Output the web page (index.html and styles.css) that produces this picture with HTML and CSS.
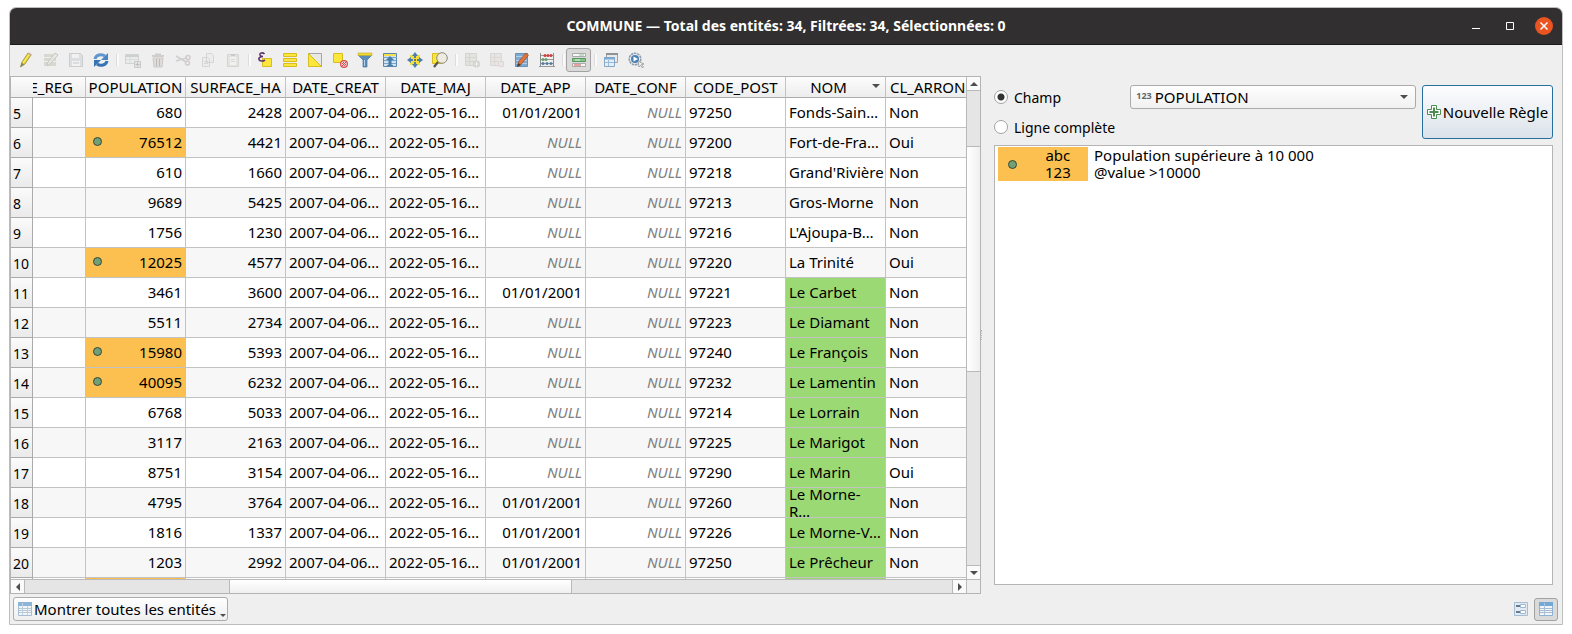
FILE: index.html
```html
<!DOCTYPE html>
<html lang="fr">
<head>
<meta charset="utf-8">
<title>COMMUNE — Total des entités: 34, Filtrées: 34, Sélectionnées: 0</title>
<link rel="stylesheet" href="styles.css">
</head>
<body>
<main class="window">
  <header class="titlebar">
    <h1 class="title">COMMUNE — Total des entités: 34, Filtrées: 34, Sélectionnées: 0</h1>
    <div class="window-controls">
      <button class="win-btn" aria-label="Réduire"><svg width="18" height="18"><path d="M5 11.500h8" stroke="#fff"/></svg></button>
      <button class="win-btn" aria-label="Agrandir"><svg width="18" height="18"><path d="M5.500 5.500h7v7h-7z" fill="none" stroke="#fff"/></svg></button>
      <button class="win-btn" aria-label="Fermer"><svg width="18" height="18"><circle cx="9" cy="9" r="9" fill="#e95420"/><path d="M5.500 5.500l7 7M12.500 5.500l-7 7" stroke="#fff" stroke-width="1.500"/></svg></button>
    </div>
  </header>

  <nav class="toolbar" aria-label="Outils">
    <button class="tool" aria-label="Mode édition"><svg width="16" height="16"><path d="M2.500 15l1.500-5 6-9 3 2-6 9z" fill="#e9d62e" stroke="#8b8434" stroke-width=".7"/><path d="M5 11l6-8.500" stroke="#fff480"/><path d="M10 1.500l1-1 3 2-1 1.500z" fill="#c9b0a0"/><path d="M2.500 15l1-4.500 3 2z" fill="#888a70"/></svg></button>
    <button class="tool" disabled aria-label="Édition multiple"><svg width="16" height="16"><path d="M1 2h12v3H1zM1 6h12v3H1zM1 10h12v4H1z" fill="#cfcfc4"/><path d="M4 14l1-4 7-9 3 2-8 9z" fill="#e5e5e0" stroke="#b8b8b0"/></svg></button>
    <button class="tool" disabled aria-label="Enregistrer"><svg width="16" height="16"><path d="M1.500 1.500h11l2 2v11h-13z" fill="#d5d8da" stroke="#bcbfc1"/><path d="M4 2h7v4H4zM4 9h8v5H4z" fill="#f2f2f2"/><path d="M5 11h6" stroke="#b6b6b6"/></svg></button>
    <button class="tool" aria-label="Actualiser"><svg width="16" height="16"><path d="M2 7a6 5 0 0 1 10-3" fill="none" stroke="#5f96cb" stroke-width="3"/><path d="M15 1v7H8z" fill="#4b86c2"/><path d="M14 9a6 5 0 0 1-10 3" fill="none" stroke="#3874b5" stroke-width="3"/><path d="M1 15V8h7z" fill="#3874b5"/></svg></button>
    <span class="sep"></span>
    <button class="tool" disabled aria-label="Ajouter une entité"><svg width="16" height="16"><path d="M.5 2.500h13v9H.5z" fill="#e7e9e9" stroke="#c3c7c8"/><path d="M.5 3h13v2H.5z" fill="#c0c4c5"/><path d="M1 7.500h12M5 5v6" stroke="#d3d7d8"/><path d="M9.500 9.500h6v6h-6z" fill="#e2e2e2" stroke="#b8b8b8"/><path d="M12.500 10.500v4M10.500 12.500h4" stroke="#aaa"/></svg></button>
    <button class="tool" disabled aria-label="Supprimer"><svg width="16" height="16"><path d="M3 6h10l-1 9H4z" fill="#d8d4d2" stroke="#bdb9b7"/><path d="M2 4h12M5 2.500h6" stroke="#c3bfbd" stroke-width="2"/><path d="M6.500 7v7M9.500 7v7" stroke="#a9a5a3"/></svg></button>
    <button class="tool" disabled aria-label="Couper"><svg width="16" height="16"><path d="M1 4l10 6M1 9l10-3" stroke="#c3c3c3" stroke-width="1.500"/><circle cx="13" cy="5.500" r="2" fill="none" stroke="#c5bcbc" stroke-width="1.500"/><circle cx="12.500" cy="11" r="2" fill="none" stroke="#c5bcbc" stroke-width="1.500"/></svg></button>
    <button class="tool" disabled aria-label="Copier"><svg width="16" height="16"><path d="M6.500 1.500h5l2 2v7h-7zM2.500 5.500h5l2 2v7h-7z" fill="#ececec" stroke="#cbcbcb"/><path d="M4 9.500h4M4 11.500h4" stroke="#cbcbcb"/></svg></button>
    <button class="tool" disabled aria-label="Coller"><svg width="16" height="16"><path d="M2.500 2.500h11v12h-11z" fill="#dededb" stroke="#cacac6"/><path d="M5 5h6v8H5z" fill="#f3f3f3"/><path d="M6 2h4v2H6z" fill="#bbb"/><path d="M6 7.500h4M6 9.500h4" stroke="#ccc"/></svg></button>
    <span class="sep"></span>
    <button class="tool" aria-label="Sélection par expression"><svg width="16" height="16"><path d="M5.500 6.500h9v8h-9z" fill="#fbe63c" stroke="#d8bd22"/><path d="M7.500 2C5.500 0 2.500 1 3 3c.3 1 1.500 1.500 3 1.500C3.500 4.500 1.500 5.500 2 7.500 2.500 9.500 6 9.500 8 8" fill="none" stroke="#5d3566" stroke-width="1.600"/></svg></button>
    <button class="tool" aria-label="Tout sélectionner"><svg width="16" height="16"><path d="M1.500 1.500h13v3h-13zM1.500 6.500h13v3h-13zM1.500 11.500h13v3h-13z" fill="#fbe63c" stroke="#d8bd22"/></svg></button>
    <button class="tool" aria-label="Inverser la sélection"><svg width="16" height="16"><path d="M1.500 1.500h13v13z" fill="#e8e8e6" stroke="#a5a5a5"/><path d="M1.500 1.500v13h13z" fill="#fbe63c" stroke="#d8bd22"/></svg></button>
    <button class="tool" aria-label="Désélectionner"><svg width="16" height="16"><path d="M1.500 1.500h9v9h-9z" fill="#fbe63c" stroke="#d8bd22"/><circle cx="12" cy="12" r="3.400" fill="#f7d9d9" stroke="#d65050" stroke-width="1.200"/><path d="M10 14l4-4M10 12l2-2M12 14l2-2" stroke="#d65050"/></svg></button>
    <button class="tool" aria-label="Filtrer"><svg width="16" height="16"><path d="M1 3h14l-5 5v7H6V8z" fill="#5c8cb8" stroke="#48779f" stroke-width=".7"/><path d="M1 1h14v2.500H1z" fill="#f1d934" stroke="#bfa92a" stroke-width=".6"/><path d="M7.500 8v6" stroke="#b6d1e8"/></svg></button>
    <button class="tool" aria-label="Déplacer en haut"><svg width="16" height="16"><path d="M1.500 1.500h13v13h-13z" fill="#d3e1ed" stroke="#5b88b1"/><path d="M2 2h12v2H2z" fill="#f6e04b"/><path d="M1 5.500h14M2 8.500h12M2 11.500h12" stroke="#7da5c8"/><path d="M8 4l4 4H9.500v5h-3V8H4z" fill="#447cab"/><path d="M5 13.500h6" stroke="#447cab"/></svg></button>
    <button class="tool" aria-label="Centrer la carte"><svg width="16" height="16"><path d="M3 3h10v10H3z" fill="#f5df3c"/><path d="M8 0l3 4H9v2H7V4H5zM8 16l3-4H9v-2H7v2H5zM0 8l4-3v2h2v2H4v2zM16 8l-4-3v2h-2v2h2v2z" fill="#4f80aa"/><path d="M7 7h2v2H7z" fill="#81712d"/></svg></button>
    <button class="tool" aria-label="Zoomer sur la sélection"><svg width="16" height="16"><path d="M.5 1.500h10v10H.5z" fill="#fbe63c" stroke="#d8bd22"/><circle cx="10" cy="6" r="5.300" fill="#eeecdf" stroke="#8c8c84"/><path d="M6 10l-4 5" stroke="#555" stroke-width="2.200"/></svg></button>
    <span class="sep"></span>
    <button class="tool" disabled aria-label="Nouveau champ"><svg width="16" height="16"><path d="M1.500 1.500h11v12h-11z" fill="#dedfda" stroke="#cacac4"/><path d="M5.500 2v11M2 5.500h10M2 9.500h10" stroke="#c9ccc4"/><circle cx="12.500" cy="12" r="3.500" fill="#c6c6be"/><path d="M12.500 9.500v5M10 12h5" stroke="#eee"/></svg></button>
    <button class="tool" disabled aria-label="Supprimer le champ"><svg width="16" height="16"><path d="M1.500 1.500h11v12h-11z" fill="#e4e1de" stroke="#d2cfcc"/><path d="M5.500 2v11M2 5.500h10M2 9.500h10" stroke="#d2d0cd"/><path d="M9 9h6v6H9z" fill="#dccfcf"/><path d="M10 10l4 4M14 10l-4 4" stroke="#eee"/></svg></button>
    <button class="tool" aria-label="Organiser les colonnes"><svg width="16" height="16"><path d="M1.500 1.500h12v13h-12z" fill="#7fa9d0" stroke="#6990b5"/><path d="M2 4.500h11M2 8.500h11M2 11.500h11" stroke="#b5cee4"/><path d="M3.500 14l1.500-5 7-8 2.500 2L7.500 12z" fill="#e3733a" stroke="#994e27" stroke-width=".7"/><path d="M3 15l1-4 3 2z" fill="#513c31"/></svg></button>
    <button class="tool" aria-label="Calculatrice de champ"><svg width="16" height="16"><path d="M1.500 1v13M14.500 1v13" stroke="#8d8d8d"/><path d="M0 14.500h16M2 3.500h12M2 7.500h12M2 11.500h12" stroke="#999"/><g fill="#cc4040"><circle cx="6" cy="3.500" r="1.500"/><circle cx="9" cy="3.500" r="1.500"/><circle cx="12" cy="3.500" r="1.500"/></g><g fill="#65a06c"><circle cx="4" cy="7.500" r="1.500"/><circle cx="7" cy="7.500" r="1.500"/></g><g fill="#57809f"><circle cx="4" cy="11.500" r="1.500"/><circle cx="8" cy="11.500" r="1.500"/><circle cx="12" cy="11.500" r="1.500"/></g></svg></button>
    <span class="sep"></span>
    <button class="tool pressed" aria-label="Mise en forme conditionnelle" aria-pressed="true"><svg width="16" height="16"><path d="M1.500 1.500h13v3h-13zM1.500 11.500h13v3h-13z" fill="#f8f8f8" stroke="#aaa"/><path d="M1.500 6.500h13v3h-13z" fill="#82c589" stroke="#579760"/><path d="M4 8h5" stroke="#e3f1e3"/><path d="M8 3h5" stroke="#8fc797"/><path d="M3 13h7" stroke="#d74949"/></svg></button>
    <span class="sep"></span>
    <button class="tool" aria-label="Ancrer la table"><svg width="16" height="16"><path d="M3.500 1.500h11v9h-11z" fill="#e9e9e9" stroke="#9fa3a6"/><path d="M3 1h12v2H3z" fill="#8e9396"/><path d="M1.500 5.500h10v9h-10z" fill="#e4eef7" stroke="#83a8c9"/><path d="M1 5h11v2.500H1z" fill="#7fa9d0"/><path d="M2 10.500h9M5.500 8v6" stroke="#9bbbd7"/></svg></button>
    <button class="tool" aria-label="Actions"><svg width="16" height="16"><circle cx="7" cy="7" r="5.800" fill="#e4ebf1" stroke="#8c9caa" stroke-width="1.500" stroke-dasharray="2.500 .7"/><circle cx="7" cy="7" r="4" fill="#4b80b2"/><path d="M5.500 4.500L10 7l-4.500 2.500z" fill="#fff"/><path d="M10 9l6 3-2.500.5 2 2.500-1 1-2-2.500L11 15z" fill="#eee" stroke="#888" stroke-width=".7"/></svg></button>
  </nav>

  <div class="workspace">
    <section class="grid-pane" aria-label="Table attributaire">
      <div class="viewport">
        <table class="grid">
          <colgroup><col class="c-num"><col class="c-reg"><col><col><col><col><col><col><col><col><col></colgroup>
          <thead>
            <tr><th></th><th class="cut-left"><span>E_REG</span></th><th>POPULATION</th><th>SURFACE_HA</th><th>DATE_CREAT</th><th>DATE_MAJ</th><th>DATE_APP</th><th>DATE_CONF</th><th>CODE_POST</th><th class="sorted"><span>NOM</span><i class="arrow down"></i></th><th class="cut-right">CL_ARRON</th></tr>
          </thead>
          <tbody>
            <tr><th>5</th><td></td><td class="n">680</td><td class="n">2428</td><td>2007-04-06…</td><td>2022-05-16…</td><td class="n">01/01/2001</td><td class="null">NULL</td><td>97250</td><td>Fonds-Sain…</td><td>Non</td></tr>
            <tr><th>6</th><td></td><td class="n big"><i class="dot"></i>76512</td><td class="n">4421</td><td>2007-04-06…</td><td>2022-05-16…</td><td class="null">NULL</td><td class="null">NULL</td><td>97200</td><td>Fort-de-Fra…</td><td>Oui</td></tr>
            <tr><th>7</th><td></td><td class="n">610</td><td class="n">1660</td><td>2007-04-06…</td><td>2022-05-16…</td><td class="null">NULL</td><td class="null">NULL</td><td>97218</td><td>Grand'Rivière</td><td>Non</td></tr>
            <tr><th>8</th><td></td><td class="n">9689</td><td class="n">5425</td><td>2007-04-06…</td><td>2022-05-16…</td><td class="null">NULL</td><td class="null">NULL</td><td>97213</td><td>Gros-Morne</td><td>Non</td></tr>
            <tr><th>9</th><td></td><td class="n">1756</td><td class="n">1230</td><td>2007-04-06…</td><td>2022-05-16…</td><td class="null">NULL</td><td class="null">NULL</td><td>97216</td><td>L'Ajoupa-B…</td><td>Non</td></tr>
            <tr><th>10</th><td></td><td class="n big"><i class="dot"></i>12025</td><td class="n">4577</td><td>2007-04-06…</td><td>2022-05-16…</td><td class="null">NULL</td><td class="null">NULL</td><td>97220</td><td>La Trinité</td><td>Oui</td></tr>
            <tr><th>11</th><td></td><td class="n">3461</td><td class="n">3600</td><td>2007-04-06…</td><td>2022-05-16…</td><td class="n">01/01/2001</td><td class="null">NULL</td><td>97221</td><td class="le">Le Carbet</td><td>Non</td></tr>
            <tr><th>12</th><td></td><td class="n">5511</td><td class="n">2734</td><td>2007-04-06…</td><td>2022-05-16…</td><td class="null">NULL</td><td class="null">NULL</td><td>97223</td><td class="le">Le Diamant</td><td>Non</td></tr>
            <tr><th>13</th><td></td><td class="n big"><i class="dot"></i>15980</td><td class="n">5393</td><td>2007-04-06…</td><td>2022-05-16…</td><td class="null">NULL</td><td class="null">NULL</td><td>97240</td><td class="le">Le François</td><td>Non</td></tr>
            <tr><th>14</th><td></td><td class="n big"><i class="dot"></i>40095</td><td class="n">6232</td><td>2007-04-06…</td><td>2022-05-16…</td><td class="null">NULL</td><td class="null">NULL</td><td>97232</td><td class="le">Le Lamentin</td><td>Non</td></tr>
            <tr><th>15</th><td></td><td class="n">6768</td><td class="n">5033</td><td>2007-04-06…</td><td>2022-05-16…</td><td class="null">NULL</td><td class="null">NULL</td><td>97214</td><td class="le">Le Lorrain</td><td>Non</td></tr>
            <tr><th>16</th><td></td><td class="n">3117</td><td class="n">2163</td><td>2007-04-06…</td><td>2022-05-16…</td><td class="null">NULL</td><td class="null">NULL</td><td>97225</td><td class="le">Le Marigot</td><td>Non</td></tr>
            <tr><th>17</th><td></td><td class="n">8751</td><td class="n">3154</td><td>2007-04-06…</td><td>2022-05-16…</td><td class="null">NULL</td><td class="null">NULL</td><td>97290</td><td class="le">Le Marin</td><td>Oui</td></tr>
            <tr><th>18</th><td></td><td class="n">4795</td><td class="n">3764</td><td>2007-04-06…</td><td>2022-05-16…</td><td class="n">01/01/2001</td><td class="null">NULL</td><td>97260</td><td class="le"><div class="two-line">Le Morne-<br>R…</div></td><td>Non</td></tr>
            <tr><th>19</th><td></td><td class="n">1816</td><td class="n">1337</td><td>2007-04-06…</td><td>2022-05-16…</td><td class="n">01/01/2001</td><td class="null">NULL</td><td>97226</td><td class="le">Le Morne-V…</td><td>Non</td></tr>
            <tr><th>20</th><td></td><td class="n">1203</td><td class="n">2992</td><td>2007-04-06…</td><td>2022-05-16…</td><td class="n">01/01/2001</td><td class="null">NULL</td><td>97250</td><td class="le">Le Prêcheur</td><td>Non</td></tr>
            <tr><th></th><td></td><td class="big"></td><td></td><td></td><td></td><td></td><td></td><td></td><td class="le"></td><td></td></tr>
          </tbody>
        </table>
      </div>
      <div class="vscroll"><button class="step" aria-label="Haut"><i class="arrow up"></i></button><div class="v-track"><div class="v-thumb"></div></div><button class="step" aria-label="Bas"><i class="arrow down"></i></button></div>
      <div class="hscroll"><button class="step" aria-label="Gauche"><i class="arrow left"></i></button><div class="h-track"><div class="h-thumb"></div></div><button class="step" aria-label="Droite"><i class="arrow right"></i></button></div>
      <div class="corner"></div>
    </section>

    <div class="splitter"><i></i></div>

    <aside class="rules">
      <form class="rule-form">
        <label class="choice"><input type="radio" name="scope" checked>Champ</label>
        <label class="choice row-choice"><input type="radio" name="scope">Ligne complète</label>
        <div class="combo"><span class="combo-type">123</span><select aria-label="Champ"><option>POPULATION</option></select><i class="arrow down"></i></div>
        <button type="button" class="new-rule"><svg width="14" height="14"><path d="M4.500 .5h5v4h4v5h-4v4h-5v-4h-4v-5h4z" fill="#fff" stroke="#4f8a52"/><path d="M7 2.500v9M2.500 7h9" stroke="#4f8a52" stroke-width="2"/></svg>Nouvelle Règle</button>
      </form>
      <ul class="rule-list">
        <li class="rule"><span class="swatch"><i class="dot"></i><span>abc<br>123</span></span><span>Population supérieure à 10 000<br>@value &gt;10000</span></li>
      </ul>
    </aside>
  </div>

  <footer class="footer">
    <button class="show-all"><svg width="14" height="14"><path d="M.5 .5h13v13H.5z" fill="#f2f5f8" stroke="#a4bdd5"/><path d="M0 0h14v4H0z" fill="#8db5da"/><path d="M4.500 1v12M9.500 4v9" stroke="#c0d3e5"/><path d="M1 6.500h12M1 8.500h12M1 10.500h12" stroke="#b9c9d8"/></svg>Montrer toutes les entités<i class="arrow down small"></i></button>
    <div class="views">
      <button class="view" aria-label="Vue formulaire"><svg width="14" height="14"><path d="M.5 .5h13v13H.5z" fill="#e3eaf2" stroke="#a4bdd5"/><path d="M2 4h4M2 10h4" stroke="#46566c" stroke-width="1.500"/><path d="M6.500 2.500h5v3h-5zM6.500 8.500h5v3h-5z" fill="#fff" stroke="#9bb7d3"/></svg></button>
      <button class="view pressed" aria-label="Vue table" aria-pressed="true"><svg width="14" height="14"><path d="M.5 .5h13v13H.5z" fill="#f2f5f8" stroke="#8fb2d3"/><path d="M0 0h14v4H0z" fill="#75a8d4"/><path d="M5.500 1v12" stroke="#a8c5e0"/><path d="M1 6.500h12M1 8.500h12M1 10.500h12" stroke="#a8bdd1"/></svg></button>
    </div>
  </footer>
</main>
</body>
</html>
```
FILE: styles.css
```css
* { box-sizing: border-box; }
body { margin: 0; padding: 7px 9px 9px; height: 100vh; background: #fff; color: #000; font: 15px/17px "Noto Sans", "Open Sans", sans-serif; }
button, select { font: inherit; color: inherit; margin: 0; padding: 0; border: 0; background: none; }
svg { display: block; flex: none; }
.window { height: 100%; display: flex; flex-direction: column; background: #efefef; border: 1px solid #bdbdbd; border-radius: 7px 7px 0 0; overflow: hidden; }

.titlebar { display: grid; grid-template-columns: 1fr auto 1fr; align-items: center; flex: none; height: 37px; background: #322f30; border-bottom: 1px solid #1c1a1b; color: #fff; }
.title { grid-column: 2; margin: 0; font-size: 14px; line-height: 18px; font-weight: 700; }
.window-controls { display: flex; justify-content: flex-end; gap: 16px; padding-right: 9px; }
.win-btn { width: 18px; height: 18px; }

.toolbar { display: flex; align-items: center; flex: none; height: 31px; padding: 0 0 1px 3px; }
.tool { display: flex; align-items: center; justify-content: center; width: 25px; height: 24px; }
.tool:disabled { opacity: .7; }
.sep { width: 7px; height: 12px; border-left: 3px solid transparent; }
.sep::before { content: ""; display: block; width: 2px; height: 12px; background: #fafafa; border-left: 1px solid #dcdcdc; }
.pressed { background: #dadada; border: 1px solid #a2a2a2; border-radius: 3px; }

.workspace { flex: 1; min-height: 0; display: grid; grid-template-rows: minmax(0, 1fr); grid-template-columns: minmax(0, 971fr) 13px minmax(0, 568fr); }
.grid-pane { display: grid; grid-template: minmax(0, 1fr) 14px / minmax(0, 1fr) 14px; border: 1px solid #b4b4b4; }
.viewport { overflow: hidden; background: #fff; }
.grid { table-layout: fixed; width: 975px; border-collapse: separate; border-spacing: 0; }
.grid col { width: 100px; }
.grid .c-num { width: 22px; }
.grid .c-reg { width: 53px; }
.grid th, .grid td { padding: 0 3px; border: solid #c3c3c3; border-width: 0 1px 1px 0; white-space: nowrap; font-weight: 400; text-align: left; overflow: hidden; }
.grid td { height: 30px; }
.grid tbody tr:nth-child(even) { background: #f7f7f7; }
.grid thead th { height: 21px; padding: 1px 0 0; line-height: 19px; text-align: center; background: linear-gradient(#fcfcfc, #ededed); border-bottom-color: #ababab; }
.grid thead th:first-child { border-right: 0; }
.grid tbody th { padding: 2px 0 0 2px; font-size: 14px; border-color: #ababab; background: linear-gradient(#fbfbfb, #eaeaea); }
.grid thead .cut-left { padding-right: 12px; }
.cut-left span { display: flex; justify-content: flex-end; }
.grid thead .cut-right { padding-left: 4px; text-align: left; }
.grid .sorted { position: relative; padding-right: 14px; }
.sorted .arrow { position: absolute; right: 5px; top: 7px; }
.grid .n, .grid .null { text-align: right; }
.grid .null { color: #808080; font-style: italic; }
.grid .big { background: #fbc04f; }
.grid .le { background: #9bd974; }
.two-line { display: flex; align-items: center; height: 29px; }
.dot { display: inline-block; width: 9px; height: 9px; border: 1px solid #38473a; border-radius: 50%; background: #6fa076; }
.grid .dot { float: left; margin: 3px 0 0 4px; }

.arrow { display: block; width: 0; height: 0; border: 4px solid transparent; }
.arrow.down { border-top-color: #4d4d4d; border-bottom: 0; }
.arrow.up { border-bottom-color: #4d4d4d; border-top: 0; }
.arrow.left { border-right-color: #4d4d4d; border-left: 0; }
.arrow.right { border-left-color: #4d4d4d; border-right: 0; }
.arrow.small { border-width: 3px 3px 0; }

.vscroll, .hscroll { display: flex; background: #fafafa; }
.vscroll { flex-direction: column; border-left: 1px solid #b9b9b9; }
.hscroll { border-top: 1px solid #b9b9b9; }
.corner { border: solid #b9b9b9; border-width: 1px 0 0 1px; }
.step { display: flex; align-items: center; justify-content: center; flex: none; width: 13px; height: 13px; background: #fafafa; }
.v-track { flex: 1; background: #e5e5e5; border: solid #b9b9b9; border-width: 1px 0; padding-top: 55px; }
.v-thumb { height: 54%; background: linear-gradient(90deg, #fff, #f0f0f0); border: solid #b9b9b9; border-width: 1px 0; }
.h-track { flex: 1; background: #e5e5e5; border: solid #b9b9b9; border-width: 0 1px; }
.h-thumb { margin-left: 22%; width: 37%; height: 13px; background: linear-gradient(#fff, #f0f0f0); border: solid #b9b9b9; border-width: 0 1px; }
.splitter { display: flex; align-items: center; }
.splitter i { height: 10px; border-left: 1px dotted #bbb; }

.rules { display: flex; flex-direction: column; min-width: 0; padding: 9px 9px 9px 0; }
.rule-form { flex: none; display: grid; grid-template-columns: minmax(0, 130fr) minmax(0, 285fr) 131px; grid-template-rows: 24px 30px; column-gap: 6px; margin-bottom: 6px; }
.choice { display: flex; align-items: center; gap: 6px; white-space: nowrap; font-size: 14px; }
.row-choice { grid-area: 2 / 1; padding-top: 6px; }
.choice input { appearance: none; flex: none; width: 14px; height: 14px; margin: 0; border: 1px solid #a3a3a3; border-radius: 50%; background: #fff; }
.choice input:checked { background: radial-gradient(circle, #333 3px, #fff 4px); }
.combo { grid-area: 1 / 2; display: flex; align-items: center; border: 1px solid #ababab; border-radius: 3px; background: linear-gradient(#fefefe, #f1f1f1); padding: 0 7px 0 5px; }
.combo-type { font: 700 9px/12px "Open Sans", sans-serif; color: #666; padding-bottom: 2px; }
.combo select { flex: 1; appearance: none; padding-left: 3px; }
.new-rule { grid-area: 1 / 3 / 3 / 4; display: flex; align-items: center; justify-content: center; gap: 2px; border: 1px solid #25709f; border-radius: 3px; background: linear-gradient(#fdfdfe, #dbe2ea); white-space: nowrap; }
.rule-list { flex: 1; margin: 0; padding: 1px 3px; list-style: none; background: #fff; border: 1px solid #b4b4b4; }
.rule { display: flex; gap: 6px; }
.swatch { display: flex; align-items: center; gap: 28px; width: 90px; height: 34px; padding-left: 10px; background: #fbc04f; text-align: center; }
.rule .dot { flex: none; }

.footer { flex: none; display: flex; justify-content: space-between; align-items: center; height: 30px; padding: 0 4px 0 3px; }
.show-all { display: flex; align-items: center; gap: 2px; height: 24px; padding: 0 1px 0 4px; border: 1px solid #acacac; border-radius: 3px; background: linear-gradient(#fefefe, #efefef); }
.show-all .arrow { align-self: flex-end; margin: 0 0 3px 2px; }
.views { display: flex; gap: 1px; }
.view { display: flex; align-items: center; justify-content: center; width: 24px; height: 23px; }
```
